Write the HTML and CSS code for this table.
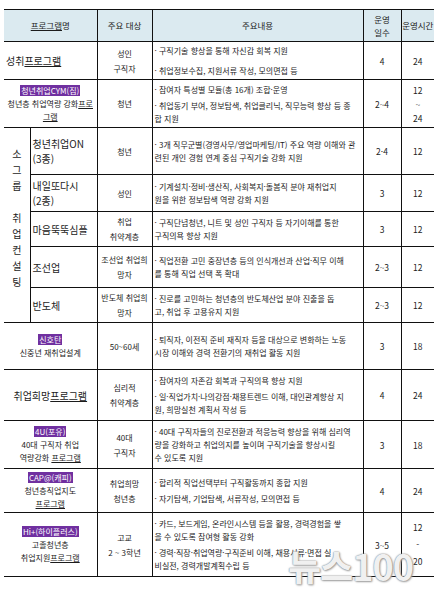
FILE: index.html
```html
<!DOCTYPE html>
<html lang="ko">
<head>
<meta charset="utf-8">
<link rel="stylesheet" href="styles.css">
</head>
<body>
<div class="page">
<table class="tbl">
  <colgroup>
    <col class="c-sub"><col class="c-prog"><col class="c-tgt"><col class="c-cnt"><col class="c-day"><col class="c-hr">
  </colgroup>
  <tr class="r-head">
    <th colspan="2" class="first"><u>프로그램</u>명</th>
    <th>주요 대상</th>
    <th>주요내용</th>
    <th>운영<br>일수</th>
    <th class="last">운영시간</th>
  </tr>
  <tr class="r1">
    <td colspan="2" class="first name big left">성취<u>프로그램</u></td>
    <td class="tgt">성인<br>구직자</td>
    <td class="cnt gap7"><p>· 구직기술 향상을 통해 자신감 회복 지원</p><p>· 취업정보수집, 지원서류 작성, 모의면접 등</p></td>
    <td class="num">4</td>
    <td class="num last">24</td>
  </tr>
  <tr class="r2">
    <td colspan="2" class="first name"><span class="hl">청년취업CYM(짐)</span><br>청년층 취업역량 강화<u>프로</u><br><u>그램</u></td>
    <td class="tgt">청년</td>
    <td class="cnt"><p>· 참여자 특성별 모듈(총 16개) 조합·운영</p><p>· 취업동기 부여, 정보탐색, 취업클리닉, 직무능력 향상 등 종<br>합 지원</p></td>
    <td class="num">2~4</td>
    <td class="num last">12<br>~<br>24</td>
  </tr>
  <tr class="r3">
    <td rowspan="5" class="first vert">소<br>그<br>룹<br><br>취<br>업<br>컨<br>설<br>팅</td>
    <td class="name big left">청년취업ON<br>(3종)</td>
    <td class="tgt">청년</td>
    <td class="cnt"><p>· 3개 직무군별(경영사무/영업마케팅/IT) 주요 역량 이해와 관<br>련된 개인 경험 연계 중심 구직기술 강화 지원</p></td>
    <td class="num">2·4</td>
    <td class="num last">12</td>
  </tr>
  <tr class="r4">
    <td class="name big left">내일또다시<br>(2종)</td>
    <td class="tgt">성인</td>
    <td class="cnt"><p>· 기계설치·정비·생산직, 사회복지·돌봄직 분야 재취업지<br>원을 위한 정보탐색 역량 강화 지원</p></td>
    <td class="num">3</td>
    <td class="num last">12</td>
  </tr>
  <tr class="r5">
    <td class="name big left">마음뚝뚝심플</td>
    <td class="tgt">취업<br>취약계층</td>
    <td class="cnt"><p>· 구직단념청년, 니트 및 성인 구직자 등 자기이해를 통한<br>구직의욕 향상 지원</p></td>
    <td class="num">3</td>
    <td class="num last">12</td>
  </tr>
  <tr class="r6">
    <td class="name big left">조선업</td>
    <td class="tgt">조선업 취업희<br>망자</td>
    <td class="cnt"><p>· 직업전환 고민 중장년층 등의 인식개선과 산업·직무 이해<br>를 통해 직업 선택 폭 확대</p></td>
    <td class="num">2~3</td>
    <td class="num last">12</td>
  </tr>
  <tr class="r7">
    <td class="name big left">반도체</td>
    <td class="tgt">반도체 취업희<br>망자</td>
    <td class="cnt"><p>· 진로를 고민하는 청년층의 반도체산업 분야 진출을 돕<br>고, 취업 후 고용유지 지원</p></td>
    <td class="num">2~3</td>
    <td class="num last">12</td>
  </tr>
  <tr class="r8">
    <td colspan="2" class="first name"><span class="hl">신호탄</span><br>신중년 재취업설계</td>
    <td class="tgt">50~60세</td>
    <td class="cnt"><p>· 퇴직자, 이전직 준비 재직자 등을 대상으로 변화하는 노동<br>시장 이해와 경력 전환기의 재취업 활동 지원</p></td>
    <td class="num">3</td>
    <td class="num last">18</td>
  </tr>
  <tr class="r9">
    <td colspan="2" class="first name big">취업희망<u>프로그램</u></td>
    <td class="tgt">심리적<br>취약계층</td>
    <td class="cnt"><p>· 참여자의 자존감 회복과 구직의욕 향상 지원</p><p>· 일·직업가치·나의강점·채용트렌드 이해, 대인관계향상 지<br>원, 희망실천 계획서 작성 등</p></td>
    <td class="num">4</td>
    <td class="num last">24</td>
  </tr>
  <tr class="r10">
    <td colspan="2" class="first name"><span class="hl">4U(포유)</span><br>40대 구직자 취업<br>역량강화 <u>프로그램</u></td>
    <td class="tgt">40대<br>구직자</td>
    <td class="cnt"><p>· 40대 구직자들의 진로전환과 적응능력 향상을 위해 심리역<br>량을 강화하고 취업의지를 높이며 구직기술을 향상시킬<br>수 있도록 지원</p></td>
    <td class="num">3</td>
    <td class="num last">18</td>
  </tr>
  <tr class="r11">
    <td colspan="2" class="first name"><span class="hl">CAP@(캐피)</span><br>청년층직업지도<br><u>프로그램</u></td>
    <td class="tgt">취업희망<br>청년층</td>
    <td class="cnt"><p>· 합리적 직업선택부터 구직활동까지 종합 지원</p><p>· 자기탐색, 기업탐색, 서류작성, 모의면접 등</p></td>
    <td class="num">4</td>
    <td class="num last">24</td>
  </tr>
  <tr class="r12">
    <td colspan="2" class="first name"><span class="hl">Hi+(하이플러스)</span><br>고졸청년층<br>취업지원<u>프로그램</u></td>
    <td class="tgt">고교<br>2 ~ 3학년</td>
    <td class="cnt"><p>· 카드, 보드게임, 온라인시스템 등을 활용, 경력경험을 쌓<br>을 수 있도록 참여형 활동 강화</p><p>· 경력·직장·취업역량·구직준비 이해, 채용서류·면접 실<br>비실전, 경력개발계획수립 등</p></td>
    <td class="num">3~5</td>
    <td class="num last tall">12<br>-<br>20</td>
  </tr>
</table>
<div class="wm">뉴스100</div>
</div>
</body>
</html>
```

FILE: styles.css
```css
html, body {
  margin: 0;
  padding: 0;
  background: #ffffff;
}
body {
  font-family: "Noto Sans CJK KR", "Noto Sans", sans-serif;
  color: #1c1c1c;
  width: 448px;
  height: 590px;
  overflow: hidden;
}
.page {
  position: relative;
  width: 448px;
  height: 590px;
}
.tbl {
  border-collapse: collapse;
  table-layout: fixed;
  width: 430px;
  margin: 9px 0 0 4px;
  font-size: 8px;
  line-height: 14px;
}
.c-sub { width: 26px; }
.c-prog { width: 67px; }
.c-tgt { width: 55px; }
.c-cnt { width: 211px; }
.c-day { width: 38px; }
.c-hr { width: 33px; }

.tbl th, .tbl td {
  border: 1px solid #111;
  padding: 0;
  vertical-align: middle;
  text-align: center;
  font-weight: normal;
  overflow: hidden;
  white-space: nowrap;
}
.tbl .first { border-left: none; }
.tbl .last { border-right: none; }
.tbl th {
  background: #dbeaf0;
  font-size: 8.5px;
  line-height: 13px;
  color: #1c1c1c;
}
.tbl u {
  text-decoration: underline;
  text-underline-offset: 1px;
}
.r-head { height: 32px; }
.r1 { height: 38px; }
.r2 { height: 48px; }
.r3 { height: 47px; }
.r4 { height: 37px; }
.r5 { height: 35px; }
.r6 { height: 41px; }
.r7 { height: 35px; }
.r8 { height: 47px; }
.r9 { height: 51px; }
.r10 { height: 48px; }
.r11 { height: 44px; }
.r12 { height: 64px; }

.name { line-height: 13px; }
.name.big { font-size: 10px; line-height: 15px; }
.name.left { text-align: left; padding-left: 2px; }
.tgt { line-height: 15px; }
.cnt {
  text-align: left !important;
  padding-left: 2px !important;
  line-height: 13px;
}
.cnt p { margin: 0; }
.cnt p + p { margin-top: 3px; }
.cnt.gap7 p + p { margin-top: 7px; }
.num { font-size: 8.5px; line-height: 14px; }
.num.tall { line-height: 17px; }
.vert {
  font-size: 10px;
  line-height: 16px;
  padding-bottom: 14px !important;
}
.hl {
  background: #7030a0;
  color: #fff;
  padding: 0 1px;
  line-height: 11px;
  display: inline-block;
}
.wm {
  position: absolute;
  left: 288px;
  top: 534px;
  font-family: "Noto Sans CJK KR", sans-serif;
  font-weight: 700;
  font-size: 36px;
  line-height: 44px;
  letter-spacing: -1px;
  color: rgba(255, 255, 255, 0.9);
  text-shadow: 0 0 1px #888, 0 0 2px #999, 1px 1px 2px #aaa;
}
```
